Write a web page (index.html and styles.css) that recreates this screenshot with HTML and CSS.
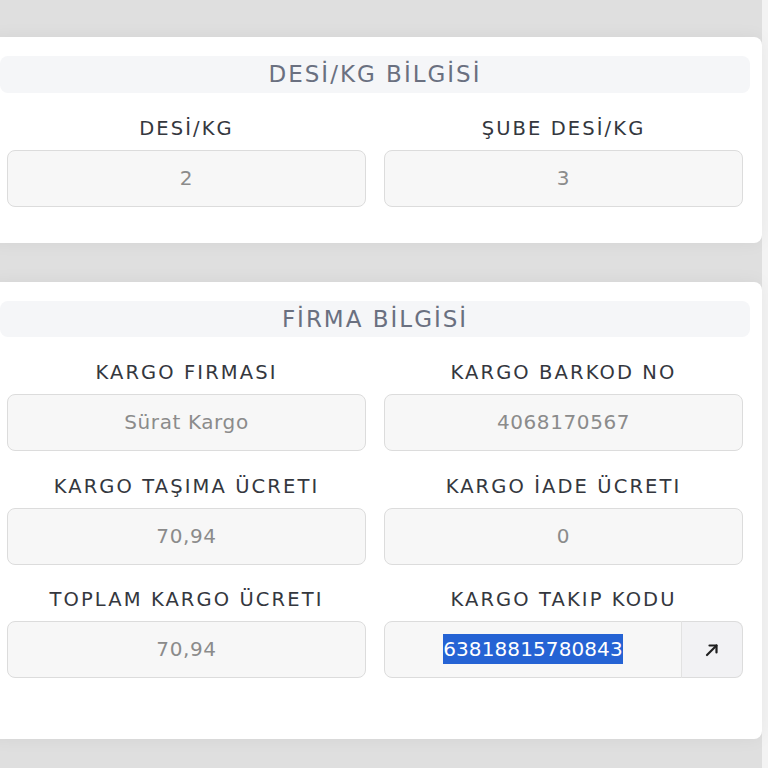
FILE: index.html
```html
<!DOCTYPE html>
<html lang="tr">
<head>
  <meta charset="UTF-8" />
  <meta name="viewport" content="width=device-width, initial-scale=1" />
  <title>Kargo Bilgisi</title>
  <link rel="stylesheet" href="styles.css">
</head>
<body>
  <div class="page">

    <section class="card">
      <h2 class="card-title">DESİ/KG BİLGİSİ</h2>
      <div class="fields">
        <div class="field">
          <label class="field-label">DESİ/KG</label>
          <div class="field-input">2</div>
        </div>
        <div class="field">
          <label class="field-label">ŞUBE DESİ/KG</label>
          <div class="field-input">3</div>
        </div>
      </div>
    </section>

    <section class="card card-tall">
      <h2 class="card-title">FİRMA BİLGİSİ</h2>
      <div class="fields">
        <div class="field">
          <label class="field-label">KARGO FIRMASI</label>
          <div class="field-input">Sürat Kargo</div>
        </div>
        <div class="field">
          <label class="field-label">KARGO BARKOD NO</label>
          <div class="field-input">4068170567</div>
        </div>
        <div class="field">
          <label class="field-label">KARGO TAŞIMA ÜCRETI</label>
          <div class="field-input">70,94</div>
        </div>
        <div class="field">
          <label class="field-label">KARGO İADE ÜCRETI</label>
          <div class="field-input">0</div>
        </div>
        <div class="field">
          <label class="field-label">TOPLAM KARGO ÜCRETI</label>
          <div class="field-input">70,94</div>
        </div>
        <div class="field">
          <label class="field-label">KARGO TAKIP KODU</label>
          <div class="input-group">
            <div class="field-input"><span class="selected">63818815780843</span></div>
            <button class="input-btn" type="button" aria-label="Takip et">
              <svg width="16" height="16" viewBox="0 0 16 16" fill="none" stroke="#1f1f1f" stroke-width="2.2" stroke-linecap="round" stroke-linejoin="round">
                <path d="M3 13 L12.5 3.5" />
                <path d="M5.5 3.5 H12.5 V10.5" />
              </svg>
            </button>
          </div>
        </div>
      </div>
    </section>

  </div>
</body>
</html>
```

FILE: styles.css
```css
html, body {
  margin: 0; padding: 0;
  background: #f3f3f3;
  font-family: 'DejaVu Sans', 'Noto Sans', sans-serif;
}
* { box-sizing: border-box; }

.page {
  width: 762px;
  min-height: 768px;
  padding: 37px 0 30px;
  background: #dfdfdf;
  display: flex;
  flex-direction: column;
  gap: 39px;
}

.card {
  margin-left: -10px;
  padding: 19px 12px 36px 10px;
  background: #fff;
  border-radius: 0 8px 8px 0;
  box-shadow: 0 0 18px rgba(0,0,0,0.05);
}
.card-tall { padding-bottom: 61px; }
.card-tall .card-title { height: 36px; line-height: 36px; }

.card-title {
  margin: 0 0 24px;
  height: 37px;
  line-height: 37px;
  background: #f5f6f8;
  border-radius: 8px;
  text-align: center;
  font-size: 23px;
  font-weight: normal;
  color: #6a7080;
  letter-spacing: 2px;
}

.fields {
  margin: 0 7px;
  display: grid;
  grid-template-columns: 1fr 1fr;
  column-gap: 18px;
  row-gap: 23.5px;
}

.field {
  display: flex;
  flex-direction: column;
  gap: 9px;
}

.field-label {
  text-align: center;
  font-size: 19.5px;
  line-height: 24px;
  color: #34373e;
  letter-spacing: 2.1px;
}

.field-input {
  height: 57px;
  line-height: 55px;
  background: #f7f7f7;
  border: 1px solid #dcdcdc;
  border-radius: 8px;
  text-align: center;
  font-size: 20px;
  color: #8b8b8b;
  letter-spacing: 0.6px;
}

.input-group {
  display: flex;
}
.input-group .field-input {
  flex: 1;
  border-radius: 8px 0 0 8px;
}
.selected {
  display: inline-block;
  line-height: 30px;
  letter-spacing: 0.1px;
  background: #2563d4;
  color: #fff;
}

.input-btn {
  width: 62px;
  height: 57px;
  border: 1px solid #dcdcdc;
  border-left: 1px solid #e2e2e2;
  border-radius: 0 8px 8px 0;
  margin-left: -1px;
  background: #f2f2f4;
  display: flex;
  align-items: center;
  justify-content: center;
  cursor: pointer;
}
```
